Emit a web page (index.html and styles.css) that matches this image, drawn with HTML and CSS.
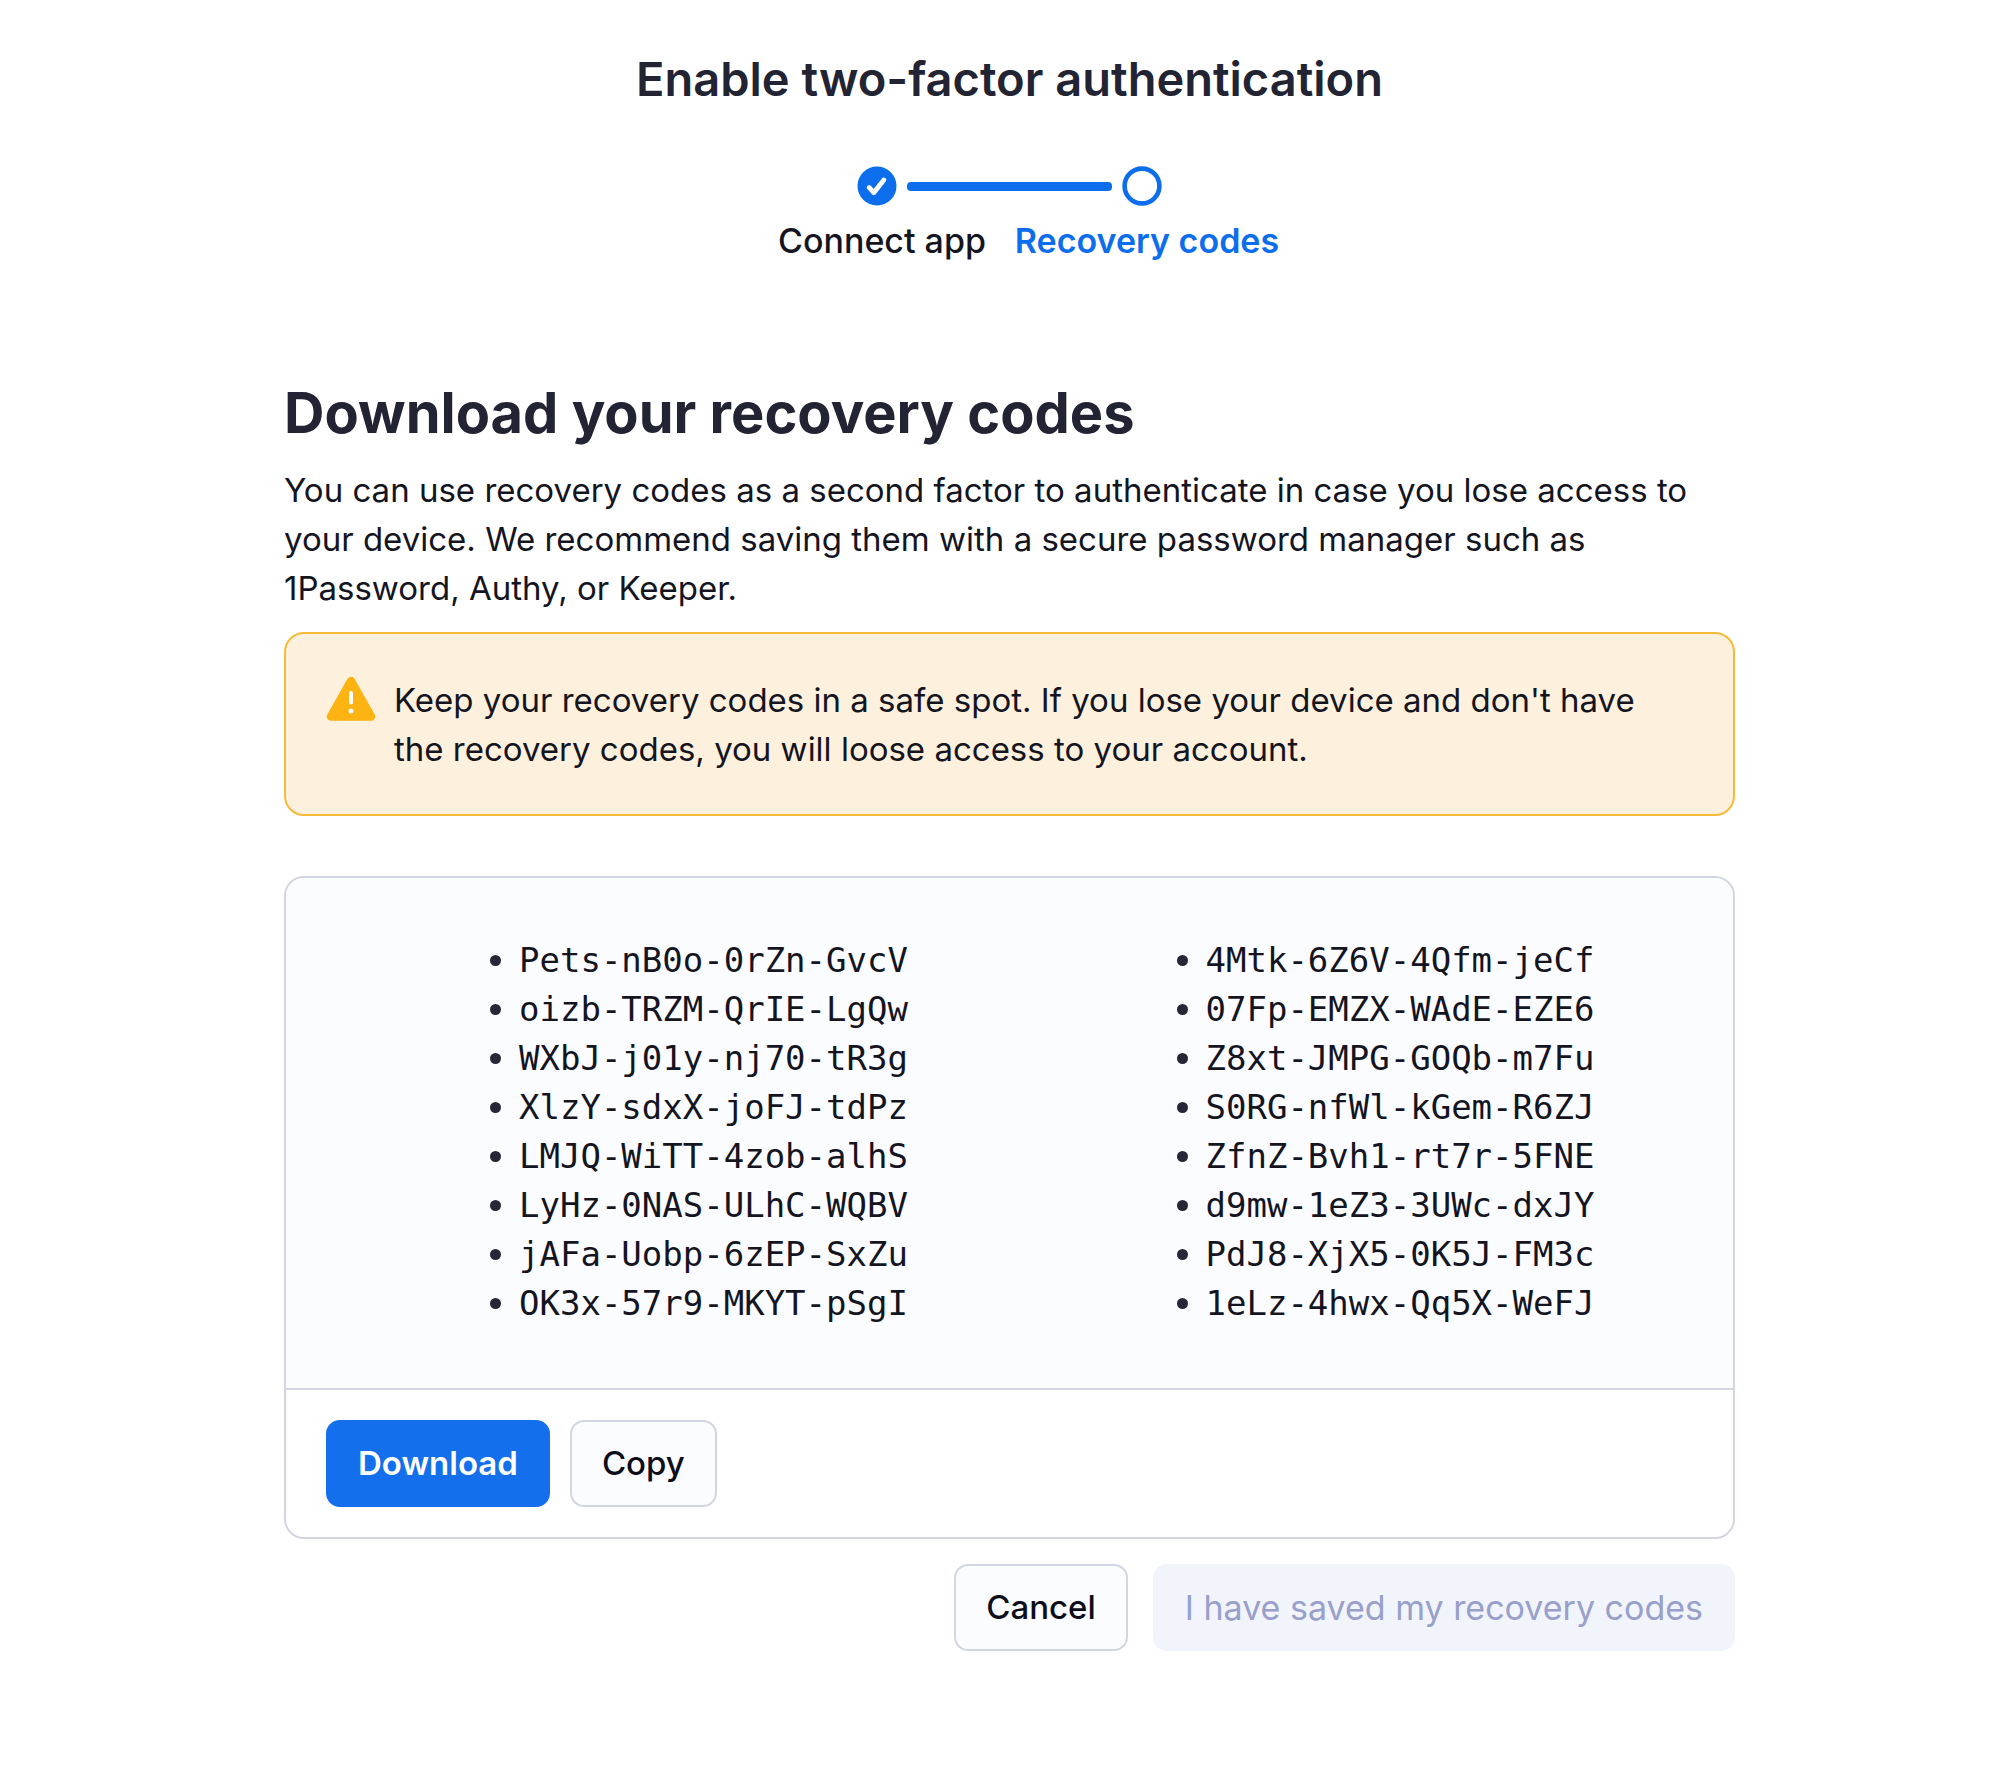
FILE: index.html
```html
<!DOCTYPE html>
<html lang="en">
<head>
<meta charset="utf-8">
<meta name="viewport" content="width=device-width, initial-scale=1">
<title>Enable two-factor authentication</title>
<link rel="stylesheet" href="styles.css">
</head>
<body>
<main class="page">
  <header class="header">
    <h1 class="title">Enable two-factor authentication</h1>
    <div class="track" aria-hidden="true">
      <svg class="dot" viewBox="0 0 40 40"><circle cx="20" cy="20" r="19.5" fill="#0d6eed"/><path d="M12.200 21.500l4.600 5.200L26.800 14" fill="none" stroke="#fff" stroke-width="4.8" stroke-linecap="round" stroke-linejoin="round"/></svg>
      <span class="line"></span>
      <svg class="dot" viewBox="0 0 40 40"><circle cx="20" cy="20" r="17.4" fill="#fff" stroke="#0d6eed" stroke-width="4.6"/></svg>
    </div>
    <ol class="steps">
      <li>Connect app</li>
      <li class="current" aria-current="step">Recovery codes</li>
    </ol>
  </header>

  <section class="content">
    <h2 class="heading">Download your recovery codes</h2>
    <p class="intro">You can use recovery codes as a second factor to authenticate in case you lose access to your device. We recommend saving them with a secure password manager such as 1Password, Authy, or Keeper.</p>

    <div class="alert" role="note">
      <svg class="alert-icon" viewBox="0 0 50 45" aria-hidden="true"><path d="M25 5L45 40.500H5Z" fill="#fdb312" stroke="#fdb312" stroke-width="8.500" stroke-linejoin="round"/><path d="M25 17v9.500" stroke="#fff" stroke-width="4" stroke-linecap="round"/><circle cx="25" cy="35" r="2.5" fill="#fff"/></svg>
      <p class="alert-text">Keep your recovery codes in a safe spot. If you lose your device and don't have the recovery codes, you will loose access to your account.</p>
    </div>

    <div class="card">
      <div class="codes">
        <ul class="code-list">
          <li>Pets-nB0o-0rZn-GvcV</li>
          <li>oizb-TRZM-QrIE-LgQw</li>
          <li>WXbJ-j01y-nj70-tR3g</li>
          <li>XlzY-sdxX-joFJ-tdPz</li>
          <li>LMJQ-WiTT-4zob-alhS</li>
          <li>LyHz-0NAS-ULhC-WQBV</li>
          <li>jAFa-Uobp-6zEP-SxZu</li>
          <li>OK3x-57r9-MKYT-pSgI</li>
        </ul>
        <ul class="code-list">
          <li>4Mtk-6Z6V-4Qfm-jeCf</li>
          <li>07Fp-EMZX-WAdE-EZE6</li>
          <li>Z8xt-JMPG-GOQb-m7Fu</li>
          <li>S0RG-nfWl-kGem-R6ZJ</li>
          <li>ZfnZ-Bvh1-rt7r-5FNE</li>
          <li>d9mw-1eZ3-3UWc-dxJY</li>
          <li>PdJ8-XjX5-0K5J-FM3c</li>
          <li>1eLz-4hwx-Qq5X-WeFJ</li>
        </ul>
      </div>
      <div class="card-actions">
        <button class="button primary" type="button">Download</button>
        <button class="button" type="button">Copy</button>
      </div>
    </div>

    <div class="page-actions">
      <button class="button" type="button">Cancel</button>
      <button class="button" type="button" disabled>I have saved my recovery codes</button>
    </div>
  </section>
</main>
</body>
</html>
```
FILE: styles.css
```css
* {
  box-sizing: border-box;
}

body {
  margin: 0;
  background: #fff;
  color: #14151f;
  font: 400 33px/49px Inter, "Liberation Sans", sans-serif;
}

h1, h2, p, ul, ol {
  margin: 0;
  padding: 0;
}

.page {
  max-width: 1470px;
  margin: 0 auto;
  padding: 49px 0 96px 19px;
}

.header {
  display: flex;
  flex-direction: column;
  align-items: center;
}

.title {
  color: #222333;
  font-size: 47px;
  font-weight: 600;
  line-height: 60px;
  text-align: center;
}

.track {
  display: flex;
  align-items: center;
  gap: 10px;
  margin-top: 57px;
}

.dot {
  width: 40px;
  height: 40px;
}

.line {
  width: 205px;
  height: 9px;
  border-radius: 4px;
  background: #0d6eed;
}

.steps {
  display: grid;
  grid-template-columns: 265px 265px;
  padding-left: 10px;
  margin-top: 10px;
  list-style: none;
  font-size: 34px;
  font-weight: 500;
  text-align: center;
  white-space: nowrap;
}

.current {
  color: #0d6eed;
  font-weight: 600;
}

.heading {
  margin-top: 112px;
  color: #222333;
  font-size: 56px;
  font-weight: 700;
  line-height: 72px;
}

.intro {
  margin-top: 17px;
}

.alert {
  display: flex;
  gap: 18px;
  margin-top: 19px;
  padding: 42px 40px 40px;
  border: 2px solid #f5bc3a;
  border-radius: 20px;
  background: #fdf0dc;
}

.alert-icon {
  flex: none;
  width: 50px;
  height: 45px;
}

.card {
  margin-top: 60px;
  border: 2px solid #d3d6e2;
  border-radius: 20px;
  background: #fff;
  overflow: hidden;
}

.codes {
  display: grid;
  grid-template-columns: 1fr 1fr;
  padding: 58px 37px 60px;
  border-bottom: 2px solid #d3d6e2;
  background: #fbfcff;
}

.code-list {
  padding-left: 167px;
  list-style: none;
  font-family: "DejaVu Sans Mono", "Liberation Mono", monospace;
  font-size: 34px;
}

.code-list li {
  display: flex;
  align-items: center;
  gap: 18px;
}

.code-list li::before {
  content: "";
  width: 11px;
  height: 11px;
  border-radius: 50%;
  background: #262736;
}

.card-actions {
  display: flex;
  gap: 20px;
  padding: 30px 40px;
}

.page-actions {
  display: flex;
  justify-content: flex-end;
  gap: 25px;
  margin-top: 25px;
}

.button {
  height: 87px;
  padding: 0 30px;
  border: 2px solid #d3d6e2;
  border-radius: 14px;
  background: #fbfcff;
  color: #0d0e1a;
  font: inherit;
  font-weight: 500;
}

.primary {
  border-color: #136fec;
  background: #136fec;
  color: #fff;
  font-weight: 600;
}

.button:disabled {
  border-color: #f2f4fb;
  background: #f2f4fb;
  color: #98a0cb;
  font-size: 34px;
  font-weight: 400;
}
```
